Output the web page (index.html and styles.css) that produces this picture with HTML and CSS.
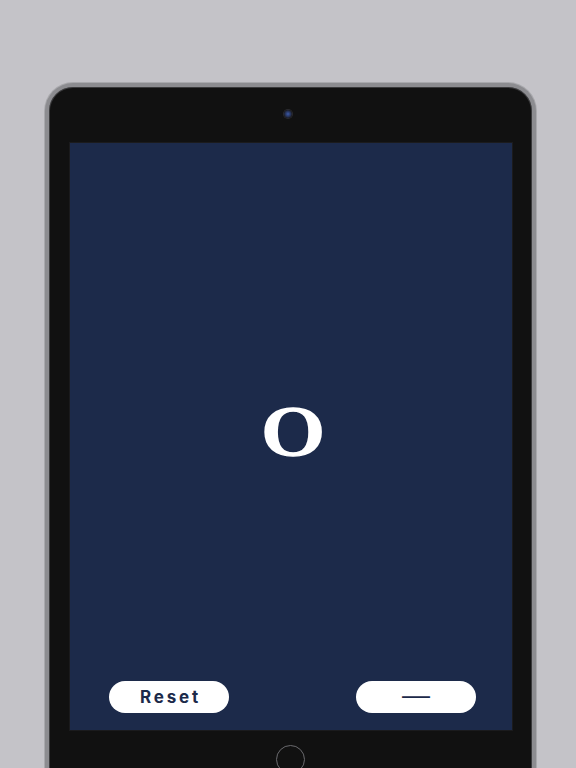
FILE: index.html
```html
<!DOCTYPE html>
<html lang="en">
<head>
<meta charset="utf-8">
<title>Counter</title>
<link rel="stylesheet" href="styles.css">
</head>
<body>
<div class="device">
  <div class="camera"></div>
  <main class="screen">
    <div class="count-area">
      <span class="count">0</span>
    </div>
    <div class="controls">
      <button class="btn btn-reset" type="button">Reset</button>
      <button class="btn btn-minus" type="button" aria-label="Decrement">—</button>
    </div>
  </main>
  <div class="home"></div>
</div>
</body>
</html>
```
FILE: styles.css
```css
html, body {
  margin: 0;
  padding: 0;
  height: 768px;
  overflow: hidden;
}

body {
  background: #c4c3c8;
  padding-top: 83px;
  box-sizing: border-box;
  font-family: "Liberation Sans", Arial, sans-serif;
}

.device {
  margin-left: 45px;
  width: 491px;
  height: 720px;
  box-sizing: border-box;
  border: 4px solid #8c8c90;
  border-bottom: none;
  border-radius: 28px 28px 0 0;
  background: #111111;
  box-shadow: inset 0 0 0 1px #3a3a3c, 0 0 0 1px #a9a9ad;
  display: flex;
  flex-direction: column;
  align-items: flex-start;
}

.camera {
  align-self: center;
  margin-top: 23px;
  margin-right: 5px;
  width: 8px;
  height: 8px;
  border-radius: 50%;
  background: radial-gradient(circle at 50% 50%, #3d5aa8 0, #26345c 45%, #1c1c22 75%);
  box-shadow: 0 0 0 1px #2a2a2e;
}

.screen {
  margin-top: 25px;
  margin-left: 21px;
  width: 442px;
  height: 587px;
  background: #1c2a4a;
  box-shadow: 0 0 0 1px #1b1b1d;
  display: flex;
  flex-direction: column;
  padding-top: 44px;
  box-sizing: border-box;
}

.count-area {
  flex: 1;
  display: flex;
  align-items: center;
  justify-content: center;
}

.count {
  display: inline-block;
  font-family: "DejaVu Serif", "Liberation Serif", serif;
  font-weight: normal;
  font-size: 63px;
  line-height: 1;
  color: #ffffff;
  -webkit-text-stroke: 1.3px #ffffff;
  transform: scaleX(1.74);
  margin-left: 4px;
}

.controls {
  display: flex;
  justify-content: space-between;
  padding: 0 36px 17px 39px;
}

.btn {
  width: 120px;
  height: 32px;
  border: none;
  border-radius: 16px;
  background: #ffffff;
  color: #1c2a4a;
  padding: 0;
  display: flex;
  align-items: center;
  justify-content: center;
  font-family: "Liberation Sans", Arial, sans-serif;
}

.btn-reset {
  font-family: Inter, "Liberation Sans", Arial, sans-serif;
  font-size: 17px;
  font-weight: 700;
  letter-spacing: 2.8px;
  padding-left: 3px;
}

.btn-minus {
  font-size: 28px;
  line-height: 1;
  padding-bottom: 4px;
  box-sizing: border-box;
}

.home {
  align-self: center;
  margin-top: 15px;
  margin-right: 1px;
  width: 27px;
  height: 27px;
  border-radius: 50%;
  border: 1.5px solid #6a6a6e;
}
```
